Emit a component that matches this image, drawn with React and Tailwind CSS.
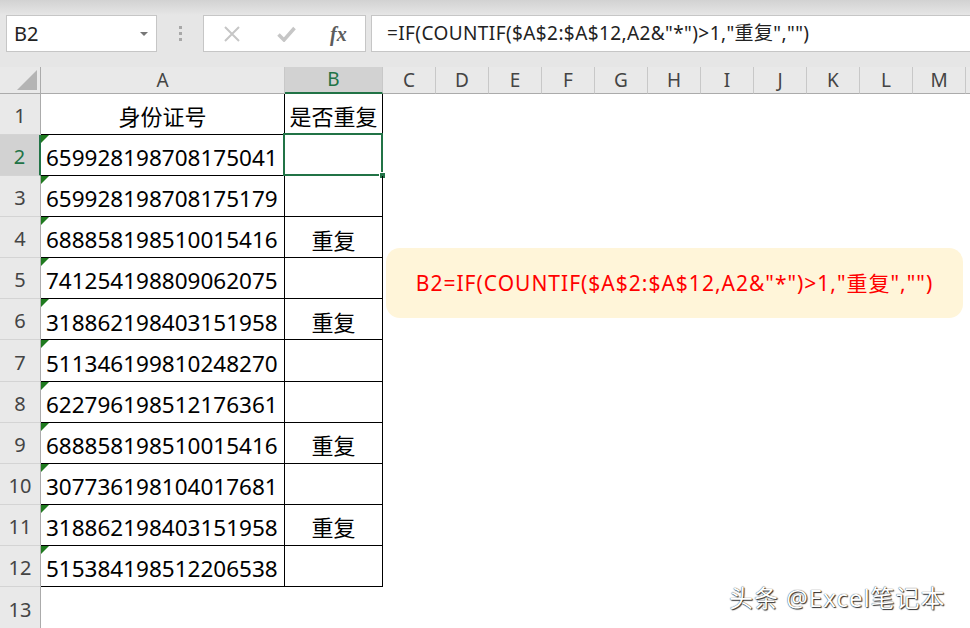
import React from "react";

const rows = [
  { a: "659928198708175041", b: "" },
  { a: "659928198708175179", b: "" },
  { a: "688858198510015416", b: "重复" },
  { a: "741254198809062075", b: "" },
  { a: "318862198403151958", b: "重复" },
  { a: "511346199810248270", b: "" },
  { a: "622796198512176361", b: "" },
  { a: "688858198510015416", b: "重复" },
  { a: "307736198104017681", b: "" },
  { a: "318862198403151958", b: "重复" },
  { a: "515384198512206538", b: "" },
];

const otherCols = ["C", "D", "E", "F", "G", "H", "I", "J", "K", "L", "M"];

const formula = '=IF(COUNTIF($A$2:$A$12,A2&"*")>1,"重复","")';

function FormulaBar() {
  return (
    <div className="h-[67px] bg-[#e6e6e6] flex flex-col">
      <div className="h-[15px] bg-gradient-to-b from-[#d2d2d2] to-[#e6e6e6]" />
      <div className="h-[37px] flex items-stretch">
        <div className="ml-[6px] w-[151px] bg-white border border-[#c6c6c6] flex items-center pl-[7px] pr-[8px]">
          <span className="text-[20px] text-[#222] flex-1">B2</span>
          <span className="w-0 h-0 border-l-[4px] border-r-[4px] border-t-[4px] border-l-transparent border-r-transparent border-t-[#777]" />
        </div>
        <div className="w-[46px] flex flex-col items-center justify-center gap-[3px]">
          <span className="w-[3px] h-[3px] bg-[#a8a8a8]" />
          <span className="w-[3px] h-[3px] bg-[#a8a8a8]" />
          <span className="w-[3px] h-[3px] bg-[#a8a8a8]" />
        </div>
        <div className="w-[163px] bg-white border border-[#c6c6c6] flex items-center pl-[19px]">
          <svg width="18" height="16" viewBox="0 0 18 16" className="mr-[36px]">
            <path d="M2 1 L16 15 M16 1 L2 15" stroke="#c6c6c6" strokeWidth="2" fill="none" />
          </svg>
          <svg width="19" height="16" viewBox="0 0 19 16" className="mr-[34px]">
            <path d="M1.5 8.5 L7 14 L17.5 2" stroke="#c6c6c6" strokeWidth="3.5" fill="none" />
          </svg>
          <span className="font-['Liberation_Serif',serif] italic font-bold text-[20px] text-[#5c5c5c] leading-none">
            fx
          </span>
        </div>
        <div className="ml-[5px] flex-1 bg-white border border-r-0 border-[#c6c6c6] flex items-center pl-[15px]">
          <span className="text-[19px] tracking-[0.4px] text-[#222] whitespace-nowrap">{formula}</span>
        </div>
      </div>
    </div>
  );
}

function RowHead({ n, selected }) {
  return (
    <div
      className={`h-full flex items-center justify-center text-[20px] border-b border-[#d4d4d4] ${
        selected
          ? "bg-[#d2d2d2] text-[#217346] border-r-2 border-r-[#217346]"
          : "bg-[#e9e9e9] text-[#444] border-r border-r-[#ababab]"
      }`}
    >
      <span className="pt-[4px]">{n}</span>
    </div>
  );
}

export default function App() {
  return (
    <div className="relative w-[970px] h-[628px] overflow-hidden bg-white font-['Noto_Sans','Noto_Sans_CJK_SC',sans-serif]">
      <FormulaBar />

      <div className="grid grid-cols-[41px_244px_98px_repeat(11,53px)_1fr] grid-rows-[27px_41px_repeat(11,41.1px)_42px]">
        {/* column header row */}
        <div className="relative bg-[#e9e9e9] border-r border-b border-[#ababab]">
          <div className="absolute right-[3px] bottom-[3px] w-0 h-0 border-l-[20px] border-l-transparent [border-bottom:20px_solid_#b4b4b4]" />
        </div>
        <div className="bg-[#e9e9e9] border-r border-[#c8c8c8] border-b border-b-[#ababab] flex items-center justify-center text-[19px] text-[#444]">
          A
        </div>
        <div className="bg-[#d2d2d2] border-r border-[#c8c8c8] border-b-2 border-b-[#217346] flex items-center justify-center text-[19px] text-[#217346]">
          B
        </div>
        {otherCols.map((c) => (
          <div
            key={c}
            className="bg-[#e9e9e9] border-r border-[#c8c8c8] border-b border-b-[#ababab] flex items-center justify-center text-[19px] text-[#444]"
          >
            {c}
          </div>
        ))}
        <div className="bg-[#e9e9e9] border-b border-[#ababab]" />

        {/* row 1 */}
        <RowHead n={1} />
        <div className="border-r border-b border-black flex items-center justify-center text-[22px] pt-[4px]">
          身份证号
        </div>
        <div className="border-r border-b border-black flex items-center justify-center text-[22px] pt-[4px]">
          是否重复
        </div>
        {otherCols.map((c) => (
          <div key={c} />
        ))}
        <div />

        {/* rows 2-12 */}
        {rows.map((r, i) => (
          <React.Fragment key={i}>
            <RowHead n={i + 2} selected={i === 0} />
            <div className="relative border-r border-b border-black flex items-center pl-[5px] pt-[6px] text-[22.5px] text-black">
              <span className="absolute left-0 top-0 w-0 h-0 border-t-[8px] border-r-[8px] border-t-[#1f7a1f] border-r-transparent" />
              {r.a}
            </div>
            <div className="relative border-r border-b border-black flex items-center justify-center pt-[6px] text-[22px] text-black">
              {r.b}
              {i === 0 && (
                <>
                  <span className="absolute -left-[2px] -top-[2px] -right-[1px] -bottom-[1px] border-2 border-[#217346]" />
                  <span className="absolute -right-[4px] -bottom-[4px] w-[7px] h-[7px] bg-[#217346] border border-white" />
                </>
              )}
            </div>
            {otherCols.map((c) => (
              <div key={c} />
            ))}
            <div />
          </React.Fragment>
        ))}

        {/* row 13 */}
        <RowHead n={13} />
      </div>

      {/* callout */}
      <div className="absolute left-[386px] top-[248px] w-[577px] h-[70px] rounded-[14px] bg-[#fff5d9] flex items-center justify-center">
        <span className="text-[21px] tracking-[1px] text-[#ff0000] whitespace-nowrap pt-[2px]">
          B2=IF(COUNTIF($A$2:$A$12,A2&amp;"*")&gt;1,"重复","")
        </span>
      </div>

      {/* watermark */}
      <div className="absolute left-[729px] top-[580px] text-[24px] text-white tracking-[1px] [text-shadow:0_0_1px_#111,1px_1px_1px_#333]">
        头条 @Excel笔记本
      </div>
    </div>
  );
}
